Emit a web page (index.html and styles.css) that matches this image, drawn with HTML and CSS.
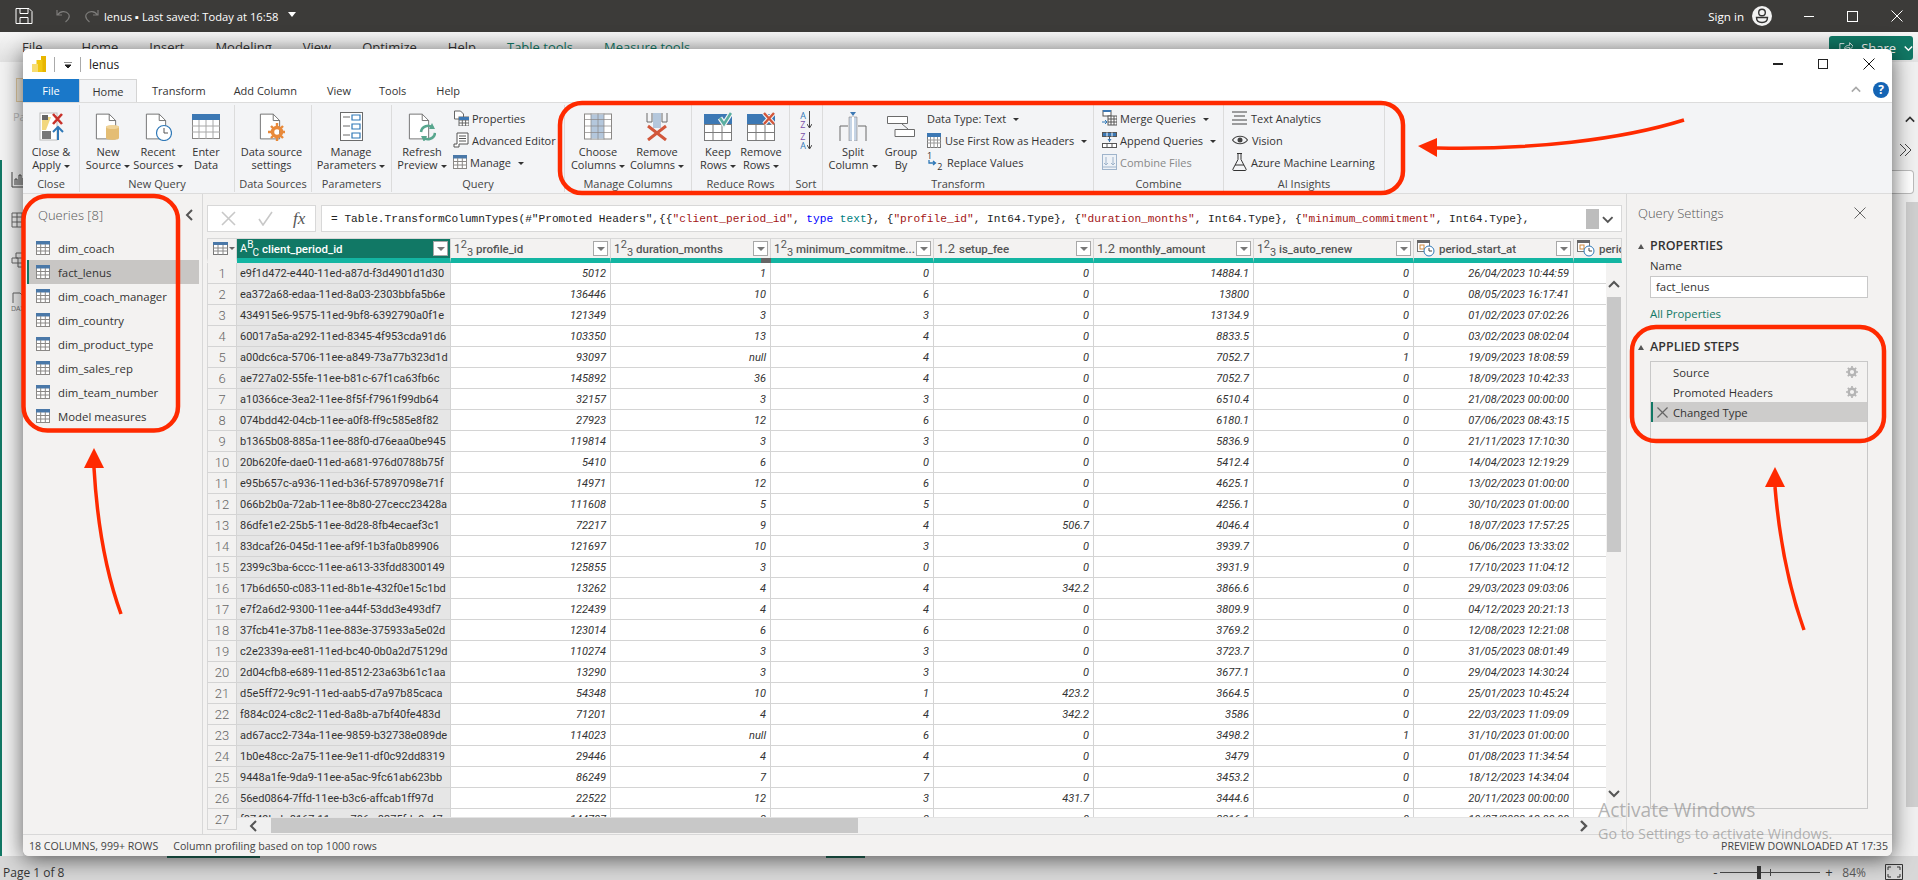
FILE: index.html
```html
<!DOCTYPE html>
<html lang="en">
<head>
<meta charset="utf-8">
<title>lenus - Power Query Editor</title>
<link rel="stylesheet" href="styles.css">
</head>
<body>
<svg class="defs" width="0" height="0" aria-hidden="true">
  <symbol id="qt" viewBox="0 0 14 14"><rect x=".5" y=".5" width="13" height="13" fill="#fff" stroke="#8a8886"/><rect x="0" y="0" width="14" height="3.5" fill="#4a78a8"/><path d="M0 6.5h14M0 10h14M4.700 3v11M9.300 3v11" stroke="#8a8886" fill="none"/></symbol>
  <symbol id="gear" viewBox="0 0 12 12"><circle cx="6" cy="6" r="3.300" fill="none" stroke="#b5b5b5" stroke-width="2.400"/><path d="M6 0v2.500M6 9.500V12M0 6h2.500M9.500 6H12M1.800 1.800l1.800 1.800M8.400 8.400l1.800 1.800M1.800 10.200l1.800-1.800M8.400 3.600l1.800-1.800" stroke="#b5b5b5" stroke-width="1.700"/></symbol>
  <symbol id="doc" viewBox="0 0 24 29"><path d="M1.500 1h14l7 7v20h-21z" fill="#fff" stroke="#6b6b6b"/><path d="M15.500 1v7h7" fill="none" stroke="#6b6b6b"/></symbol>
  <symbol id="cl" viewBox="0 0 12 12"><path d="M8 1 3 6l5 5" fill="none" stroke="currentColor" stroke-width="2"/></symbol>
  <symbol id="cr" viewBox="0 0 12 12"><path d="m4 1 5 5-5 5" fill="none" stroke="currentColor" stroke-width="2.400"/></symbol>
  <symbol id="cu" viewBox="0 0 12 12"><path d="m1 8 5-5 5 5" fill="none" stroke="currentColor" stroke-width="2"/></symbol>
  <symbol id="cd" viewBox="0 0 12 12"><path d="m1 4 5 5 5-5" fill="none" stroke="currentColor" stroke-width="2"/></symbol>
</svg>

<div class="app">
  <header class="titlebar">
    <svg class="tb-save" width="18" height="16" viewBox="0 0 18 16"><path d="M1 .5h13l3 3v12H1zM5 .5v5h8v-5M5 15.500v-6h8v6" fill="none" stroke="#fff"/></svg>
    <svg class="tb-undo" width="16" height="16" viewBox="0 0 16 16"><path d="M2 2v5h5M2.500 7C5 3 11 2.500 13.500 6c2 3-.5 6-3 8" fill="none" stroke="#7c7b79" stroke-width="1.200"/></svg>
    <svg class="tb-redo" width="16" height="16" viewBox="0 0 16 16"><path d="M14 2v5H9M13.500 7C11 3 5 2.500 2.500 6c-2 3 .5 6 3 8" fill="none" stroke="#7c7b79" stroke-width="1.200"/></svg>
    <span class="tb-title">lenus &#9642; Last saved: Today at 16:58</span>
    <span class="tb-caret"></span>
    <span class="tb-sign">Sign in</span>
    <svg class="tb-avatar" width="20" height="20" viewBox="0 0 20 20"><circle cx="10" cy="10" r="10" fill="#f2f2f2"/><circle cx="10" cy="6.500" r="3.300" fill="none" stroke="#333" stroke-width="1.400"/><path d="M4.500 11.500h11c0 3-2 5-5.500 5s-5.500-2-5.500-5z" fill="none" stroke="#333" stroke-width="1.400"/></svg>
    <span class="winbtn wb-min"></span>
    <span class="winbtn wb-max"></span>
    <svg class="winx" width="12" height="12" viewBox="0 0 12 12"><path d="m.5.500 11 11m0-11-11 11" stroke="#fff"/></svg>
  </header>

  <div class="bg-tabs">
    <span class="bt bt-file">File</span><span class="bt">Home</span><span class="bt">Insert</span><span class="bt">Modeling</span><span class="bt">View</span><span class="bt">Optimize</span><span class="bt">Help</span><span class="bt bt-tool">Table tools</span><span class="bt bt-tool">Measure tools</span>
    <span class="share"><svg width="16" height="14" viewBox="0 0 16 14"><path d="M6 2H1v11h11V9M6 9c0-4 3-5 6-5V1l4 4-4 4V6.500C9 6.500 7.500 7 6 9z" fill="none" stroke="#fff"/></svg>Share<svg width="10" height="10" viewBox="0 0 12 12"><use href="#cd"/></svg></span>
  </div>

  <div class="bg-main">
    <aside class="rail">
      <div class="rail-top"><span class="paste"></span><span class="pa">Pa</span></div>
      <div class="rail-low">
        <svg width="16" height="16" viewBox="0 0 16 16"><path d="M1 0v15h15M4 13V7h2v6M8 13V3h2v10M12 13V6h2v7" fill="none" stroke="#444"/></svg>
        <svg width="16" height="16" viewBox="0 0 16 16"><path d="M1 1h15v14H1zM1 5h15M1 10h15M6 1v14M11 1v14" fill="none" stroke="#666"/></svg>
        <svg width="16" height="16" viewBox="0 0 16 16"><path d="M5 1h8v5H5zM1 6h6v5H1zM7 11h8v4H7z" fill="none" stroke="#666"/></svg>
        <span class="dax"><svg width="14" height="12" viewBox="0 0 14 12"><path d="M2 11V1h7l3 3v7" fill="none" stroke="#666"/></svg>DAX</span>
      </div>
    </aside>
    <div class="bg-center"></div>
    <aside class="bg-right">
      <svg class="br-up" width="10" height="10" viewBox="0 0 12 12"><use href="#cu"/></svg>
      <svg class="br-more" width="14" height="14" viewBox="0 0 14 14"><path d="m2 1 6 6-6 6M7 1l6 6-6 6" fill="none" stroke="#444"/></svg>
      <div class="br-box"></div>
      <div class="br-scroll"></div>
    </aside>
  </div>

  <footer class="bg-foot">
    <span class="page">Page 1 of 8</span>
    <span class="pgmark pm1"></span><span class="pgmark pm2"></span>
    <div class="zoom">
      <span class="z-sign">-</span>
      <span class="z-track"><span class="z-thumb"></span><span class="z-tick"></span></span>
      <span class="z-sign">+</span>
      <span class="z-val">84%</span>
      <svg width="18" height="16" viewBox="0 0 18 16"><path d="M.5.500h17v15H.5zM3 6V3h3M12 3h3v3M15 10v3h-3M6 13H3v-3" fill="none" stroke="#333"/></svg>
    </div>
  </footer>

  <section class="window">
    <div class="wintitle">
      <svg class="pbi" width="14" height="16" viewBox="0 0 14 16"><rect x="9" y="0" width="5" height="16" fill="#e8b600"/><rect x="4.500" y="4" width="6" height="12" fill="#f2c811"/><rect x="0" y="8" width="6" height="8" fill="#f7dc6f"/></svg>
      <span class="wt-sep"></span>
      <svg class="wt-qat" width="8" height="7" viewBox="0 0 8 7"><path d="M0 0h8M1 3h6L4 6z" stroke="#222" fill="#222"/></svg>
      <span class="wt-sep"></span>
      <span class="wt-name">lenus</span>
      <span class="wt-min"></span>
      <span class="wt-max"></span>
      <svg class="wt-x" width="12" height="12" viewBox="0 0 12 12"><path d="m.5.500 11 11m0-11-11 11" stroke="#111"/></svg>
    </div>

    <nav class="tabs">
      <span class="tab tab-file">File</span>
      <span class="tab tab-home">Home</span>
      <span class="tab tab-transform">Transform</span>
      <span class="tab tab-add">Add Column</span>
      <span class="tab tab-view">View</span>
      <span class="tab tab-tools">Tools</span>
      <span class="tab tab-help">Help</span>
      <svg class="tab-collapse" width="10" height="10" viewBox="0 0 12 12"><use href="#cu"/></svg>
      <span class="help-circle">?</span>
    </nav>

    <div class="ribbon">
      <div class="group g-close">
        <div class="g-body">
          <div class="big w57">
            <svg class="ico" width="25" height="29" viewBox="0 0 25 29"><rect x="1" y="1" width="17" height="27" fill="#fff" stroke="#bbb"/><path d="M3 5h9l-5 13H3z" fill="#f2d77e"/><rect x="3" y="3" width="6" height="5" fill="#666"/><rect x="3" y="19" width="9" height="8" fill="#777"/><path d="m14 2 9 10m0-10-9 10" stroke="#c8322b" stroke-width="2.600"/><path d="M19 28V15m-5 5 5-5 5 5" stroke="#2f78b7" stroke-width="2" fill="none"/></svg>
            <span class="lbl">Close &amp;<br><span class="dd">Apply</span></span>
          </div>
        </div>
        <div class="g-name">Close</div>
      </div>

      <div class="group g-newq">
        <div class="g-body">
          <div class="big w56">
            <svg class="ico" width="26" height="29" viewBox="0 0 26 29"><use href="#doc" width="22" height="29"/><path d="M11 15c0-2 13-2 13 0v11c0 2.500-13 2.500-13 0z" fill="#e4bd74"/><ellipse cx="17.500" cy="15" rx="6.500" ry="2" fill="#f0d49a"/></svg>
            <span class="lbl">New<br><span class="dd">Source</span></span>
          </div>
          <div class="big w44">
            <svg class="ico" width="27" height="29" viewBox="0 0 27 29"><use href="#doc" width="22" height="29"/><circle cx="19" cy="21" r="7.500" fill="#fff" stroke="#2f78b7" stroke-width="1.200"/><path d="M19 16v5h4" fill="none" stroke="#555"/></svg>
            <span class="lbl">Recent<br><span class="dd">Sources</span></span>
          </div>
          <div class="big w52">
            <svg class="ico" width="28" height="25" viewBox="0 0 28 25"><rect x=".5" y=".5" width="27" height="24" fill="#fff" stroke="#8a8886"/><rect width="28" height="6" fill="#3c78b4"/><path d="M0 12h28M0 18h28M7 6v19M14 6v19M21 6v19" stroke="#a8a8a8" fill="none"/></svg>
            <span class="lbl">Enter<br>Data</span>
          </div>
        </div>
        <div class="g-name">New Query</div>
      </div>

      <div class="group g-data">
        <div class="g-body">
          <div class="big w73">
            <svg class="ico" width="26" height="29" viewBox="0 0 26 29"><use href="#doc" width="22" height="29"/><circle cx="18" cy="20" r="4.500" fill="none" stroke="#e8893a" stroke-width="3.500"/><path d="M18 11v4M18 25v4M9 20h4M23 20h3M12 14l2 2M22 24l2 2M12 26l2-2M22 16l2-2" stroke="#e8893a" stroke-width="2.400"/></svg>
            <span class="lbl">Data source<br>settings</span>
          </div>
        </div>
        <div class="g-name">Data Sources</div>
      </div>

      <div class="group g-param">
        <div class="g-body">
          <div class="big w78">
            <svg class="ico" width="23" height="29" viewBox="0 0 23 29"><rect x=".5" y=".5" width="22" height="28" fill="#fff" stroke="#6b6b6b"/><path d="M3 5h7M3 14h7M3 23h7" stroke="#6b6b6b"/><path d="M12 3h8v5h-8zM12 12h8v5h-8zM12 21h8v5h-8z" fill="#fff" stroke="#2f78b7" stroke-width="1.200"/></svg>
            <span class="lbl">Manage<br><span class="dd">Parameters</span></span>
          </div>
        </div>
        <div class="g-name">Parameters</div>
      </div>

      <div class="group g-query">
        <div class="g-body">
          <div class="big w60">
            <svg class="ico" width="28" height="29" viewBox="0 0 28 29"><use href="#doc" width="22" height="29"/><path d="M13 20a7 7 0 0 1 12-4M27 21a7 7 0 0 1-12 4" fill="none" stroke="#58a68e" stroke-width="2.600"/><path d="m24 11 3 6-6 0zM16 30l-3-6 6 0z" fill="#58a68e"/></svg>
            <span class="lbl">Refresh<br><span class="dd">Preview</span></span>
          </div>
          <div class="smalls">
            <div class="sm"><svg width="16" height="16" viewBox="0 0 16 16"><path d="M1.500 1h6l3 3v5h-9z" fill="#fff" stroke="#666"/><rect x="6" y="7" width="10" height="9" fill="#fff" stroke="#666"/><path d="M6 10h10M6 13h10M9.300 7v9M12.600 7v9" stroke="#666"/><rect x="6" y="7" width="10" height="3" fill="#3c78b4"/></svg><span>Properties</span></div>
            <div class="sm"><svg width="16" height="16" viewBox="0 0 16 16"><path d="M4 1h11v11H6v3H1v-3h3z" fill="#fff" stroke="#555"/><path d="M6 4h7M6 6.500h7M6 9h7" stroke="#555"/></svg><span>Advanced Editor</span></div>
            <div class="sm"><svg width="14" height="14" viewBox="0 0 14 14"><use href="#qt"/></svg><span class="dd dd-w">Manage</span></div>
          </div>
        </div>
        <div class="g-name">Query</div>
      </div>

      <div class="group g-mcol">
        <div class="g-body">
          <div class="big w66">
            <svg class="ico" width="28" height="26" viewBox="0 0 28 26"><rect x=".5" y=".5" width="27" height="25" fill="#fff" stroke="#8a8886"/><rect x="7" y="1" width="13" height="24" fill="#b4c7dc"/><path d="M0 6h28M0 12.500h28M0 19h28M7 0v26M14 0v26M20 0v26" stroke="#8a8886" fill="none" stroke-opacity=".7"/></svg>
            <span class="lbl">Choose<br><span class="dd">Columns</span></span>
          </div>
          <div class="big w52">
            <svg class="ico" width="22" height="29" viewBox="0 0 22 29"><path d="M6 1v9H1V1M16 1v9h5V1" fill="none" stroke="#6b6b6b"/><rect x="7" y="1" width="8" height="15" fill="#b4c7dc"/><path d="m2 14 18 14M20 14 2 28" stroke="#d2573b" stroke-width="3"/></svg>
            <span class="lbl">Remove<br><span class="dd">Columns</span></span>
          </div>
        </div>
        <div class="g-name">Manage Columns</div>
      </div>

      <div class="group g-rows">
        <div class="g-body">
          <div class="big w52">
            <svg class="ico" width="28" height="29" viewBox="0 0 28 29"><rect x=".5" y="12.500" width="27" height="16" fill="#fff" stroke="#7b7b7b"/><path d="M0 20.500h28M9 12v17M18 12v17" stroke="#7b7b7b"/><rect y="2" width="28" height="10" fill="#3c78b4"/><path d="m16 6 4 6 7-11" fill="none" stroke="#f3f4f6" stroke-width="5"/><path d="m16 6 4 6 7-11" fill="none" stroke="#5aaea0" stroke-width="2.600"/></svg>
            <span class="lbl">Keep<br><span class="dd">Rows</span></span>
          </div>
          <div class="big w34">
            <svg class="ico" width="28" height="29" viewBox="0 0 28 29"><rect x=".5" y="12.500" width="27" height="16" fill="#fff" stroke="#7b7b7b"/><path d="M0 20.500h28M9 12v17M18 12v17" stroke="#7b7b7b"/><rect y="2" width="28" height="10" fill="#3c78b4"/><path d="m17 1 10 11M27 1 17 12" stroke="#f3f4f6" stroke-width="4.500"/><path d="m17 1 10 11M27 1 17 12" stroke="#d2573b" stroke-width="2.400"/></svg>
            <span class="lbl">Remove<br><span class="dd">Rows</span></span>
          </div>
        </div>
        <div class="g-name">Reduce Rows</div>
      </div>

      <div class="group g-sort">
        <div class="g-body g-sortb">
          <div class="sorti"><span class="az"><b class="a-b">A</b><b class="a-p">Z</b></span><svg width="5" height="18" viewBox="0 0 5 18"><path d="M2.500 0v17M0 13l2.500 4L5 13" fill="none" stroke="#444"/></svg></div>
          <div class="sorti"><span class="az"><b class="a-p">Z</b><b class="a-b">A</b></span><svg width="5" height="18" viewBox="0 0 5 18"><path d="M2.500 0v17M0 13l2.500 4L5 13" fill="none" stroke="#444"/></svg></div>
        </div>
        <div class="g-name">Sort</div>
      </div>

      <div class="group g-trans">
        <div class="g-body">
          <div class="big w60">
            <svg class="ico" width="28" height="29" viewBox="0 0 28 29"><path d="M1 29V14h8M27 29V14h-8" fill="none" stroke="#6b6b6b"/><path d="M10 5h8v24h-8z" fill="#c6d5e6" stroke="#8a8886" stroke-width=".6"/><path d="M14 5v24" stroke="#fff" stroke-width="2"/><path d="m11 0 3 4 3-4z" fill="#3c78b4"/></svg>
            <span class="lbl">Split<br><span class="dd">Column</span></span>
          </div>
          <div class="big w36">
            <svg class="ico i-group" width="28" height="21" viewBox="0 0 28 21"><path d="M.5.500h20v7H.5zM8 13.500h19.500v7H8z" fill="#fff" stroke="#6b6b6b"/><path d="m15 8 6 5" stroke="#6b6b6b"/></svg>
            <span class="lbl">Group<br>By</span>
          </div>
          <div class="smalls s-trans">
            <div class="sm"><span class="dd dd-w">Data Type: Text</span></div>
            <div class="sm sm-i"><svg width="14" height="15" viewBox="0 0 14 15"><rect x=".5" y="1" width="13" height="13.500" fill="#fff" stroke="#777"/><rect width="14" height="4" fill="#3c78b4"/><path d="M0 7h14M0 10h14M3.500 4v11M7 4v11M10.500 4v11" stroke="#999"/></svg><span class="dd dd-w">Use First Row as Headers</span></div>
            <div class="sm sm-i"><span class="rep"><i>1</i><svg width="9" height="7" viewBox="0 0 9 7"><path d="M1 0v3h6M5 1l2.500 2L5 5" fill="none" stroke="#2f78b7" stroke-width="1.300"/></svg><i>2</i></span><span>Replace Values</span></div>
          </div>
        </div>
        <div class="g-name">Transform</div>
      </div>

      <div class="group g-comb">
        <div class="g-body">
          <div class="smalls s-pad">
            <div class="sm"><svg width="15" height="16" viewBox="0 0 15 16"><rect x="1" y="0" width="8" height="6" fill="#fff" stroke="#555"/><rect x="1" y="0" width="8" height="2" fill="#3c78b4"/><rect x="6" y="6" width="9" height="9" fill="#fff" stroke="#555"/><path d="M6 9h9M6 12h9M9 6v9M12 6v9" stroke="#555"/><path d="M0 12h5M3 10l2 2-2 2" fill="none" stroke="#2f78b7"/></svg><span class="dd dd-w">Merge Queries</span></div>
            <div class="sm"><svg width="15" height="16" viewBox="0 0 15 16"><rect x=".5" y=".5" width="14" height="4" fill="#3c78b4" stroke="#555"/><path d="M5 .5v4M10 .5v4" stroke="#fff"/><rect x=".5" y="11.500" width="14" height="4" fill="#fff" stroke="#555"/><path d="M5 11.500v4M10 11.500v4M7.500 5v5" stroke="#555"/><path d="m5.500 7 2 3 2-3z" fill="#3c78b4"/></svg><span class="dd dd-w">Append Queries</span></div>
            <div class="sm sm-off"><svg width="15" height="16" viewBox="0 0 15 16"><rect x=".5" y=".5" width="14" height="15" fill="#eef2f7" stroke="#9fb4cb"/><path d="M4 3v8m-2-2 2 2 2-2M11 3v8m-2-2 2 2 2-2M1 13h13" fill="none" stroke="#9fb4cb"/></svg><span>Combine Files</span></div>
          </div>
        </div>
        <div class="g-name">Combine</div>
      </div>

      <div class="group g-ai">
        <div class="g-body">
          <div class="smalls s-pad">
            <div class="sm sm-ai"><svg width="15" height="14" viewBox="0 0 15 14"><path d="M0 1h15M2 5h11M0 9h15M0 13h15" stroke="#444"/></svg><span>Text Analytics</span></div>
            <div class="sm sm-ai"><svg width="16" height="10" viewBox="0 0 16 10"><path d="M.5 5C4 0 12 0 15.500 5 12 10 4 10 .5 5z" fill="none" stroke="#444" stroke-width="1.200"/><circle cx="8" cy="5" r="2.500" fill="#444"/></svg><span>Vision</span></div>
            <div class="sm sm-ai"><svg width="15" height="18" viewBox="0 0 15 18"><path d="M5 .5h5M6 .5v6L1 16c-.5 1 0 1.500 1 1.500h11c1 0 1.500-.5 1-1.500L9 6.500v-6M3 12h9" fill="none" stroke="#333"/></svg><span>Azure Machine Learning</span></div>
          </div>
        </div>
        <div class="g-name">AI Insights</div>
      </div>
    </div>

    <div class="body">
      <aside class="queries">
        <div class="q-head"><span>Queries [8]</span><svg width="12" height="12" viewBox="0 0 12 12"><use href="#cl"/></svg></div>
        <ul class="q-list">
          <li><svg width="14" height="14"><use href="#qt"/></svg>dim_coach</li>
          <li class="sel"><svg width="14" height="14"><use href="#qt"/></svg>fact_lenus</li>
          <li><svg width="14" height="14"><use href="#qt"/></svg>dim_coach_manager</li>
          <li><svg width="14" height="14"><use href="#qt"/></svg>dim_country</li>
          <li><svg width="14" height="14"><use href="#qt"/></svg>dim_product_type</li>
          <li><svg width="14" height="14"><use href="#qt"/></svg>dim_sales_rep</li>
          <li><svg width="14" height="14"><use href="#qt"/></svg>dim_team_number</li>
          <li><svg width="14" height="14"><use href="#qt"/></svg>Model measures</li>
        </ul>
      </aside>

      <main class="center">
        <div class="fx-row">
          <div class="fx-btns">
            <svg width="15" height="15" viewBox="0 0 15 15"><path d="m1 1 13 13m0-13L1 14" stroke="#c8c8c8" stroke-width="1.600"/></svg>
            <svg width="15" height="15" viewBox="0 0 15 15"><path d="m1 8 4 6L14 1" fill="none" stroke="#c8c8c8" stroke-width="1.600"/></svg>
            <span class="fx">fx</span>
          </div>
          <div class="fx-input">
            <code class="formula">= Table.TransformColumnTypes(#"Promoted Headers",{{<s>"client_period_id"</s>, <u>type</u> <em>text</em>}, {<s>"profile_id"</s>, Int64.Type}, {<s>"duration_months"</s>, Int64.Type}, {<s>"minimum_commitment"</s>, Int64.Type},</code>
            <span class="fx-block"></span>
            <svg class="fx-chev" width="12" height="12" viewBox="0 0 12 12"><use href="#cd"/></svg>
          </div>
        </div>

        <div class="grid">
          <table class="data">
            <colgroup><col class="c0"><col class="c1"><col class="c2"><col class="c2"><col class="c3"><col class="c2"><col class="c2"><col class="c2"><col class="c2"><col class="c4"></colgroup>
            <thead>
              <tr>
                <th class="corner"><svg width="15" height="13" viewBox="0 0 15 13"><rect x=".5" y=".5" width="14" height="12" fill="#fff" stroke="#777"/><rect width="15" height="3" fill="#4a78a8"/><path d="M0 6h15M0 9h15M5 3v10M10 3v10" stroke="#888"/></svg><i class="tri"></i></th>
                <th class="h-sel"><div class="hd"><span class="ty abc">A<sup>B</sup><sub>C</sub></span><span class="nm">client_period_id</span><span class="fb"><i class="tri"></i></span></div></th>
                <th><div class="hd"><span class="ty">1<sup>2</sup><sub>3</sub></span><span class="nm">profile_id</span><span class="fb"><i class="tri"></i></span></div></th>
                <th><div class="hd"><span class="ty">1<sup>2</sup><sub>3</sub></span><span class="nm">duration_months</span><span class="fb"><i class="tri"></i></span></div></th>
                <th><div class="hd"><span class="ty">1<sup>2</sup><sub>3</sub></span><span class="nm">minimum_commitme...</span><span class="fb"><i class="tri"></i></span></div></th>
                <th><div class="hd"><span class="ty ty-d">1.2</span><span class="nm">setup_fee</span><span class="fb"><i class="tri"></i></span></div></th>
                <th><div class="hd"><span class="ty ty-d">1.2</span><span class="nm">monthly_amount</span><span class="fb"><i class="tri"></i></span></div></th>
                <th><div class="hd"><span class="ty">1<sup>2</sup><sub>3</sub></span><span class="nm">is_auto_renew</span><span class="fb"><i class="tri"></i></span></div></th>
                <th><div class="hd"><svg class="ty-cal" width="18" height="17" viewBox="0 0 18 17"><rect x=".5" y=".5" width="12" height="11" fill="#fff" stroke="#777"/><rect width="13" height="3" fill="#666"/><rect x="3" y="5" width="4" height="4" fill="none" stroke="#d08a3c"/><circle cx="12" cy="11" r="5" fill="#fff" stroke="#2f78b7"/><path d="M12 8v3h3" fill="none" stroke="#444"/></svg><span class="nm">period_start_at</span><span class="fb"><i class="tri"></i></span></div></th>
                <th class="h-clip"><div class="hd"><svg class="ty-cal" width="18" height="17" viewBox="0 0 18 17"><rect x=".5" y=".5" width="12" height="11" fill="#fff" stroke="#777"/><rect width="13" height="3" fill="#666"/><rect x="3" y="5" width="4" height="4" fill="none" stroke="#d08a3c"/><circle cx="12" cy="11" r="5" fill="#fff" stroke="#2f78b7"/><path d="M12 8v3h3" fill="none" stroke="#444"/></svg><span class="nm">period_end_at</span></div></th>
              </tr>
            </thead>
            <tbody>
              <tr><th>1</th><td>e9f1d472-e440-11ed-a87d-f3d4901d1d30</td><td>5012</td><td>1</td><td>0</td><td>0</td><td>14884.1</td><td>0</td><td>26/04/2023 10:44:59</td><td></td></tr>
              <tr><th>2</th><td>ea372a68-edaa-11ed-8a03-2303bbfa5b6e</td><td>136446</td><td>10</td><td>6</td><td>0</td><td>13800</td><td>0</td><td>08/05/2023 16:17:41</td><td></td></tr>
              <tr><th>3</th><td>434915e6-9575-11ed-9bf8-6392790a0f1e</td><td>121349</td><td>3</td><td>3</td><td>0</td><td>13134.9</td><td>0</td><td>01/02/2023 07:02:26</td><td></td></tr>
              <tr><th>4</th><td>60017a5a-a292-11ed-8345-4f953cda91d6</td><td>103350</td><td>13</td><td>4</td><td>0</td><td>8833.5</td><td>0</td><td>03/02/2023 08:02:04</td><td></td></tr>
              <tr><th>5</th><td>a00dc6ca-5706-11ee-a849-73a77b323d1d</td><td>93097</td><td>null</td><td>4</td><td>0</td><td>7052.7</td><td>1</td><td>19/09/2023 18:08:59</td><td></td></tr>
              <tr><th>6</th><td>ae727a02-55fe-11ee-b81c-67f1ca63fb6c</td><td>145892</td><td>36</td><td>4</td><td>0</td><td>7052.7</td><td>0</td><td>18/09/2023 10:42:33</td><td></td></tr>
              <tr><th>7</th><td>a10366ce-3ea2-11ee-8f5f-f7961f99db64</td><td>32157</td><td>3</td><td>3</td><td>0</td><td>6510.4</td><td>0</td><td>21/08/2023 00:00:00</td><td></td></tr>
              <tr><th>8</th><td>074bdd42-04cb-11ee-a0f8-ff9c585e8f82</td><td>27923</td><td>12</td><td>6</td><td>0</td><td>6180.1</td><td>0</td><td>07/06/2023 08:43:15</td><td></td></tr>
              <tr><th>9</th><td>b1365b08-885a-11ee-88f0-d76eaa0be945</td><td>119814</td><td>3</td><td>3</td><td>0</td><td>5836.9</td><td>0</td><td>21/11/2023 17:10:30</td><td></td></tr>
              <tr><th>10</th><td>20b620fe-dae0-11ed-a681-976d0788b75f</td><td>5410</td><td>6</td><td>0</td><td>0</td><td>5412.4</td><td>0</td><td>14/04/2023 12:19:29</td><td></td></tr>
              <tr><th>11</th><td>e95b657c-a936-11ed-b36f-57897098e71f</td><td>14971</td><td>12</td><td>6</td><td>0</td><td>4625.1</td><td>0</td><td>13/02/2023 01:00:00</td><td></td></tr>
              <tr><th>12</th><td>066b2b0a-72ab-11ee-8b80-27cecc23428a</td><td>111608</td><td>5</td><td>5</td><td>0</td><td>4256.1</td><td>0</td><td>30/10/2023 01:00:00</td><td></td></tr>
              <tr><th>13</th><td>86dfe1e2-25b5-11ee-8d28-8fb4ecaef3c1</td><td>72217</td><td>9</td><td>4</td><td>506.7</td><td>4046.4</td><td>0</td><td>18/07/2023 17:57:25</td><td></td></tr>
              <tr><th>14</th><td>83dcaf26-045d-11ee-af9f-1b3fa0b89906</td><td>121697</td><td>10</td><td>3</td><td>0</td><td>3939.7</td><td>0</td><td>06/06/2023 13:33:02</td><td></td></tr>
              <tr><th>15</th><td>2399c3ba-6ccc-11ee-a613-33fdd8300149</td><td>125855</td><td>3</td><td>0</td><td>0</td><td>3931.9</td><td>0</td><td>17/10/2023 11:04:12</td><td></td></tr>
              <tr><th>16</th><td>17b6d650-c083-11ed-8b1e-432f0e15c1bd</td><td>13262</td><td>4</td><td>4</td><td>342.2</td><td>3866.6</td><td>0</td><td>29/03/2023 09:03:06</td><td></td></tr>
              <tr><th>17</th><td>e7f2a6d2-9300-11ee-a44f-53dd3e493df7</td><td>122439</td><td>4</td><td>4</td><td>0</td><td>3809.9</td><td>0</td><td>04/12/2023 20:21:13</td><td></td></tr>
              <tr><th>18</th><td>37fcb41e-37b8-11ee-883e-375933a5e02d</td><td>123014</td><td>6</td><td>6</td><td>0</td><td>3769.2</td><td>0</td><td>12/08/2023 12:21:08</td><td></td></tr>
              <tr><th>19</th><td>c2e2339a-ee81-11ed-bc40-0b0a2d75129d</td><td>110274</td><td>3</td><td>3</td><td>0</td><td>3723.7</td><td>0</td><td>31/05/2023 08:01:49</td><td></td></tr>
              <tr><th>20</th><td>2d04cfb8-e689-11ed-8512-23a63b61c1aa</td><td>13290</td><td>3</td><td>3</td><td>0</td><td>3677.1</td><td>0</td><td>29/04/2023 14:30:24</td><td></td></tr>
              <tr><th>21</th><td>d5e5ff72-9c91-11ed-aab5-d7a97b85caca</td><td>54348</td><td>10</td><td>1</td><td>423.2</td><td>3664.5</td><td>0</td><td>25/01/2023 10:45:24</td><td></td></tr>
              <tr><th>22</th><td>f884c024-c8c2-11ed-8a8b-a7bf40fe483d</td><td>71201</td><td>4</td><td>4</td><td>342.2</td><td>3586</td><td>0</td><td>22/03/2023 11:09:09</td><td></td></tr>
              <tr><th>23</th><td>ad67acc2-734a-11ee-9859-b32738e089de</td><td>114023</td><td>null</td><td>6</td><td>0</td><td>3498.2</td><td>1</td><td>31/10/2023 01:00:00</td><td></td></tr>
              <tr><th>24</th><td>1b0e48cc-2a75-11ee-9e11-df0c92dd8319</td><td>29446</td><td>4</td><td>4</td><td>0</td><td>3479</td><td>0</td><td>01/08/2023 11:34:54</td><td></td></tr>
              <tr><th>25</th><td>9448a1fe-9da9-11ee-a5ac-9fc61ab623bb</td><td>86249</td><td>7</td><td>7</td><td>0</td><td>3453.2</td><td>0</td><td>18/12/2023 14:34:04</td><td></td></tr>
              <tr><th>26</th><td>56ed0864-7ffd-11ee-b3c6-affcab1ff97d</td><td>22522</td><td>12</td><td>3</td><td>431.7</td><td>3444.6</td><td>0</td><td>20/11/2023 00:00:00</td><td></td></tr>
              <tr><th>27</th><td>f8749bcb-8167-11ee-a786-c8375fdc9c47</td><td>144787</td><td>3</td><td>3</td><td>0</td><td>3316.1</td><td>0</td><td>10/07/2023 12:00:00</td><td></td></tr>
            </tbody>
          </table>
          <span class="dur-mark"></span>
          <div class="vscroll">
            <span class="vs-up"><svg width="12" height="12" viewBox="0 0 12 12"><use href="#cu"/></svg></span>
            <span class="vs-thumb"></span>
            <span class="vs-down"><svg width="12" height="12" viewBox="0 0 12 12"><use href="#cd"/></svg></span>
          </div>
          <div class="hscroll">
            <span class="hs-l"><svg width="12" height="12" viewBox="0 0 12 12"><use href="#cl"/></svg></span>
            <span class="hs-thumb"></span>
            <span class="hs-r"><svg width="12" height="12" viewBox="0 0 12 12"><use href="#cr"/></svg></span>
          </div>
        </div>
      </main>

      <aside class="settings">
        <div class="s-head"><span>Query Settings</span><svg width="12" height="12" viewBox="0 0 12 12"><path d="m.5.500 11 11m0-11-11 11" stroke="#666"/></svg></div>
        <h2 class="s-sec s-props">PROPERTIES</h2>
        <div class="s-label">Name</div>
        <div class="s-input">fact_lenus</div>
        <div class="s-link">All Properties</div>
        <h2 class="s-sec s-steps">APPLIED STEPS</h2>
        <ul class="steps">
          <li>Source<svg width="12" height="12"><use href="#gear"/></svg></li>
          <li>Promoted Headers<svg width="12" height="12"><use href="#gear"/></svg></li>
          <li class="cur"><svg class="st-x" width="11" height="11" viewBox="0 0 12 12"><path d="m.5.500 11 11m0-11-11 11" stroke="#666" stroke-width="1.300"/></svg>Changed Type</li>
        </ul>
      </aside>
    </div>

    <footer class="status">
      <span>18 COLUMNS, 999+ ROWS</span>
      <span class="st-prof">Column profiling based on top 1000 rows</span>
      <span class="st-prev">PREVIEW DOWNLOADED AT 17:35</span>
    </footer>
  </section>

  <div class="activate">
    <div class="act-1">Activate Windows</div>
    <div class="act-2">Go to Settings to activate Windows.</div>
  </div>

  <svg class="marks" width="1918" height="880" viewBox="0 0 1918 880" aria-hidden="true">
    <g fill="none" stroke="#ff2a00" stroke-width="4.500">
      <rect x="560" y="103" width="843" height="90" rx="22"/>
      <rect x="23.500" y="196" width="154.500" height="234.500" rx="24"/>
      <rect x="1632" y="327" width="252" height="114" rx="24"/>
      <path d="M1684 120C1620 140 1530 150 1437 148" stroke-width="3.500"/>
      <path d="M121 614C105 570 97 520 94 468" stroke-width="3.500"/>
      <path d="M1804 630C1788 585 1779 535 1775 487" stroke-width="3.500"/>
    </g>
    <g fill="#ff2a00">
      <polygon points="1418,146 1437,138 1437,157"/>
      <polygon points="94,448 84,468 104,468"/>
      <polygon points="1775,467 1765,487 1785,487"/>
    </g>
  </svg>
</div>
</body>
</html>
```

FILE: styles.css
```css
* { box-sizing: border-box; }
html, body { margin: 0; padding: 0; }
body { width: 1918px; height: 880px; overflow: hidden; font-family: "Open Sans", "Liberation Sans", sans-serif; font-size: 11px; color: #333; background: #e8e8e8; }
ul { list-style: none; margin: 0; padding: 0; }
h2 { margin: 0; }
.defs { position: absolute; }
.app { position: relative; width: 1918px; height: 880px; overflow: hidden; display: flex; flex-direction: column; }

/* Title bar */
.titlebar { height: 32px; flex: none; background: #3c3b39; color: #fff; display: flex; align-items: center; padding-left: 15px; }
.tb-save { margin-right: 15px; }
.tb-undo { margin-left: 7px; margin-right: 13px; }
.tb-title { margin-left: 4px; font-size: 11.2px; white-space: nowrap; width: 179px; }
.tb-caret { margin-left: 5px; margin-top: -3px; border: 4px solid transparent; border-top: 5px solid #fff; border-bottom: 0; }
.tb-sign { margin-left: auto; font-size: 11.6px; }
.tb-avatar { margin-left: 8px; }
.winbtn { display: block; }
.wb-min { width: 10px; height: 1px; background: #fff; margin-left: 32px; }
.wb-max { width: 11px; height: 11px; border: 1px solid #fff; margin-left: 33px; }
.winx { margin-left: 33px; margin-right: 15px; }

/* Application behind the dialog */
.bg-tabs { height: 30px; flex: none; display: flex; background: linear-gradient(#f6f6f6, #e2e2e2); padding: 6px 5px 0 22px; gap: 31px; font-size: 13px; color: #333; }
.bt { white-space: nowrap; line-height: 18px; }
.bt-file { margin-right: 8px; }
.bt-tool { color: #117865; }
.share { margin-left: auto; width: 84px; height: 24px; margin-top: -2px; background: #117865; color: #fff; border-radius: 3px; display: flex; align-items: center; gap: 8px; padding-left: 10px; }
.bg-main { flex: 1; display: flex; min-height: 0; }
.rail { width: 23px; flex: none; display: flex; flex-direction: column; overflow: hidden; }
.rail-top { height: 98px; background: #f3f3f3; padding: 16px 0 0 16px; position: relative; }
.paste { display: block; width: 12px; height: 24px; border: 1px solid #e0c9a0; background: #f2ecdf; }
.pa { display: block; margin-left: -3px; margin-top: 7px; color: #bbb; }
.rail-low { flex: 1; background: #f3f3f3; border-left: 2px solid #117865; display: flex; flex-direction: column; gap: 24px; padding: 12px 0 0 9px; background-clip: padding-box; }
.dax { display: block; font-size: 7px; line-height: 7px; color: #777; }
.bg-center { flex: 1; background: #e8e8e8; }
.bg-right { width: 26px; flex: none; background: #f0f0f0; display: flex; flex-direction: column; }
.br-up { margin: 53px 0 0 13px; }
.br-more { margin: 18px 0 0 6px; }
.br-box { width: 22px; height: 24px; margin-top: 13px; background: #fff; border: 1px solid #bbb; border-left: 0; border-radius: 0 4px 4px 0; }
.br-scroll { width: 12px; height: 605px; margin: 8px 0 0 14px; background: #cfcfcf; }
.bg-foot { height: 24px; flex: none; background: #d8d8d8; display: flex; align-items: center; padding: 8px 0 0 3px; position: relative; font-size: 12px; color: #333; }
.pgmark { position: absolute; top: 0; height: 2px; background: #1f6655; }
.pm1 { left: 167px; width: 93px; }
.pm2 { left: 826px; width: 39px; }
.page { position: relative; z-index: 3; }
.zoom { margin-left: auto; margin-right: 15px; display: flex; align-items: center; position: relative; z-index: 3; }
.z-sign { font-size: 13px; width: 7px; color: #333; }
.z-track { display: block; width: 100px; height: 1px; background: #444; margin: 0 5px 0 0; position: relative; }
.z-thumb { position: absolute; left: 37px; top: -6px; width: 4px; height: 13px; background: #333; }
.z-tick { position: absolute; left: 50px; top: -3px; width: 1px; height: 7px; background: #444; }
.z-val { margin: 0 19px 0 10px; color: #555; }

/* Dialog */
.window { position: absolute; left: 23px; top: 49px; width: 1869px; height: 807px; background: #f3f2f1; display: flex; flex-direction: column; border-radius: 6px; box-shadow: 0 3px 22px rgba(0,0,0,.62); overflow: hidden; }
.wintitle { height: 30px; flex: none; background: #fff; display: flex; align-items: center; padding-left: 9px; font-size: 12px; color: #222; }
.wt-sep { width: 1px; height: 15px; background: #aaa; margin-left: 8px; }
.wt-qat { margin-left: 9px; margin-right: -1px; margin-top: 2px; }
.wt-sep + .wt-qat + .wt-sep { margin-left: 9px; }
.wt-name { margin-left: 8px; }
.wt-min { width: 10px; height: 2px; background: #222; margin-left: auto; }
.wt-max { width: 10px; height: 10px; border: 1px solid #222; margin-left: 35px; }
.wt-x { margin-left: 35px; margin-right: 17px; }

.tabs { height: 23px; flex: none; background: #fff; display: flex; align-items: stretch; font-size: 11px; color: #333; position: relative; }
.tab { display: flex; align-items: center; white-space: nowrap; }
.tab-file { width: 56px; justify-content: center; background: #1a78c9; color: #fff; }
.tab-home { width: 58px; justify-content: center; background: #f3f4f6; border: 1px solid #d4d4d4; border-bottom: 0; }
.tab-transform { margin-left: 15px; }
.tab-add { margin-left: 28px; }
.tab-view { margin-left: 30px; }
.tab-tools { margin-left: 28px; }
.tab-help { margin-left: 30px; }
.tab-collapse { margin: 6px 0 0 auto; color: #aaa; }
.help-circle { width: 16px; height: 16px; border-radius: 50%; background: #1464b4; color: #fff; font-weight: 700; font-size: 12px; line-height: 16px; text-align: center; margin: 3px 3px 0 12px; }

/* Ribbon */
.ribbon { height: 92px; flex: none; background: #f3f4f6; display: flex; border-top: 1px solid #dcdcdc; border-bottom: 1px solid #dcdcdc; }
.group { display: flex; flex-direction: column; border-right: 1px solid #dcdcdc; margin: 2px 0 1px; }
.g-body { flex: 1; display: flex; min-height: 0; }
.g-name { height: 16px; line-height: 15px; text-align: center; color: #444; white-space: nowrap; }
.g-close { width: 57px; } .g-newq { width: 155px; } .g-data { width: 77px; } .g-param { width: 80px; }
.g-query { width: 173px; } .g-mcol { width: 127px; } .g-rows { width: 98px; } .g-sort { width: 33px; }
.g-trans { width: 271px; } .g-comb { width: 130px; } .g-ai { width: 161px; }
.big { display: flex; flex-direction: column; align-items: center; flex: none; }
.w34 { width: 34px; } .w36 { width: 36px; } .w44 { width: 44px; } .w52 { width: 52px; } .w56 { width: 56px; }
.w57 { width: 56px; } .w60 { width: 60px; } .w66 { width: 66px; } .w73 { width: 73px; } .w78 { width: 78px; }
.ico { height: 29px; margin-top: 7px; flex: none; }
.i-group { margin-top: 11px; height: 21px; margin-bottom: 4px; }
.lbl { margin-top: 4px; line-height: 13px; text-align: center; white-space: nowrap; color: #333; }
.big .lbl { height: 27px; }
.dd::after { content: ""; display: inline-block; vertical-align: middle; margin-left: 3px; border: 3px solid transparent; border-top: 3px solid #333; border-bottom: 0; }
.dd-w::after { margin-left: 7px; }
.smalls { display: flex; flex-direction: column; padding-top: 2px; margin-left: 1px; }
.sm { height: 22px; flex: none; display: flex; align-items: center; gap: 3px; white-space: nowrap; color: #333; }
.sm svg { flex: none; }
.s-trans { margin-left: 8px; }
.sm-i { gap: 4px; }
.s-pad { padding-left: 8px; margin-left: 0; }
.sm-off { color: #888; }
.sm-ai { gap: 4px; }
.g-sortb { flex-direction: column; align-items: center; padding-top: 6px; gap: 3px; }
.sorti { display: flex; height: 18px; gap: 1px; }
.az { display: flex; flex-direction: column; font-size: 9px; line-height: 9px; }
.az b { font-weight: 400; }
.a-b { color: #2f78b7; } .a-p { color: #7a4fa8; }
.rep { display: flex; align-items: center; width: 16px; font-size: 9px; position: relative; }
.rep i { font-style: normal; }
.rep i:first-child { position: relative; top: -7px; margin-right: -4px; }
.rep svg { position: relative; top: 1px; }
.rep i:last-child { position: relative; top: 4px; }

/* Body */
.body { flex: 1; display: flex; min-height: 0; background: #f3f2f1; }
.queries { width: 180px; flex: none; border-right: 1px solid #d8d8d8; font-size: 11.4px; color: #333; }
.q-head { height: 42px; display: flex; align-items: center; padding-left: 15px; font-size: 13px; color: #555; font-weight: 300; }
.q-head svg { margin-left: auto; margin-right: 6px; color: #555; }
.q-list li { height: 24px; margin-left: 4px; width: 172px; display: flex; align-items: center; gap: 8px; padding-left: 9px; color: #333; }
.q-list .sel { background: #c8c6c4; border-left: 2px solid #117865; padding-left: 7px; }

.center { flex: 1; min-width: 0; padding: 11px 4px 1px 4px; display: flex; flex-direction: column; }
.fx-row { height: 27px; flex: none; display: flex; gap: 5px; }
.fx-btns { width: 109px; background: #fff; border: 1px solid #d8d8d8; display: flex; align-items: center; padding-left: 13px; gap: 22px; }
.fx { font-family: "Liberation Serif", serif; font-style: italic; font-size: 17px; color: #555; margin-left: -2px; }
.fx-input { flex: 1; min-width: 0; background: #fff; border: 1px solid #d8d8d8; display: flex; align-items: center; padding-left: 9px; }
.formula { font-family: "Liberation Mono", "DejaVu Sans Mono", monospace; font-size: 11.17px; white-space: pre; color: #222; flex: none; width: 1255px; overflow: hidden; }
.formula s { text-decoration: none; color: #a31515; }
.formula u { text-decoration: none; color: #0000ff; }
.formula em { font-style: normal; color: #008080; }
.fx-block { width: 14px; height: 20px; background: #bdbdbd; margin-left: auto; }
.fx-chev { margin: 0 7px 0 3px; color: #555; }

.grid { flex: 1; min-height: 0; margin-top: 6px; position: relative; overflow: hidden; background: #f3f2f1; }
.data { table-layout: fixed; width: 1415px; border-collapse: separate; border-spacing: 0; background: #fff; font-family: Roboto, "Open Sans", sans-serif; }
.c0 { width: 30px; } .c1 { width: 214px; } .c2 { width: 160px; } .c3 { width: 163px; } .c4 { width: 48px; }
.data thead th { height: 25px; padding: 0; background: #f3f2f1; border-top: 1px solid #d8d8d8; border-right: 1px solid #d4d4d4; border-bottom: 5px solid #13b5a2; font-weight: 400; overflow: hidden; white-space: nowrap; }
.data thead .corner { background: #f3f2f1; border-bottom-color: #f3f2f1; border-left: 1px solid #d8d8d8; text-align: left; padding-left: 5px; }
.corner svg { vertical-align: middle; }
.tri { display: inline-block; border: 3px solid transparent; border-top: 3px solid #666; border-bottom: 0; vertical-align: middle; margin-left: 1px; }
.hd { display: flex; align-items: center; height: 19px; padding-left: 3px; padding-right: 2px; }
.nm { font-size: 11.5px; font-weight: 500; color: #555; white-space: nowrap; }
.ty { width: 22px; flex: none; font-size: 12px; line-height: 16px; color: #555; display: flex; align-items: flex-start; padding-top: 1px; }
.ty sup, .ty sub { font-size: 11px; line-height: 11px; vertical-align: baseline; }
.ty sup { margin-top: -2px; }
.ty sub { margin-top: 6px; }
.ty-d { font-size: 13px; align-items: center; width: 22px; padding-top: 0; }
.ty-cal { flex: none; width: 18px; margin-right: 4px; }
.fb { flex: none; margin-left: auto; width: 15px; height: 15px; background: #fff; border: 1px solid #a8a8a8; display: flex; align-items: center; justify-content: center; }
.fb .tri { margin: 0; border-width: 4px; border-top-color: #777; border-bottom: 0; }
.data thead .h-sel { background: #117865; }
.h-sel .nm, .h-sel .abc { color: #fff; }
.abc { width: 22px; font-size: 11px; }
.abc sup, .abc sub { font-size: 10px; }
.abc sub { margin-left: -1px; }
.h-clip .hd { padding-right: 0; }
.data tbody th { height: 21px; padding: 0; background: #f3f2f1; border-right: 1px solid #d4d4d4; border-bottom: 1px solid #d4d4d4; border-left: 1px solid #d8d8d8; font-size: 13px; font-weight: 300; color: #666; text-align: center; }
.data td { height: 21px; padding: 0 4px 0 0; border-right: 1px solid #d4d4d4; border-bottom: 1px solid #d4d4d4; text-align: right; font-style: italic; white-space: nowrap; overflow: hidden; color: #333; font-size: 11px; }
.data td:nth-child(2) { background: #e6e6e6; text-align: left; font-style: normal; padding-left: 3px; }
.dur-mark { position: absolute; left: 554px; top: 20px; width: 10px; height: 5px; background: #666; }

.vscroll { position: absolute; right: 0; top: 25px; width: 16px; bottom: 16px; background: #f3f2f1; display: flex; flex-direction: column; align-items: center; color: #555; }
.vs-up { height: 34px; display: flex; align-items: flex-end; padding-bottom: 6px; }
.vs-thumb { width: 14px; height: 255px; background: #c8c8c8; }
.vs-down { margin-top: auto; height: 30px; display: flex; align-items: flex-start; }
.hscroll { position: absolute; left: 30px; right: 0; bottom: 0; height: 16px; background: #f0f0f0; display: flex; align-items: center; color: #555; border-top: 1px solid #e4e4e4; }
.hs-l { width: 34px; display: flex; justify-content: center; }
.hs-thumb { width: 587px; height: 15px; background: #c8c8c8; }
.hs-r { margin-left: auto; margin-right: 33px; display: flex; }

.settings { width: 266px; flex: none; border-left: 1px solid #d8d8d8; padding-left: 11px; }
.s-head { height: 38px; display: flex; align-items: center; font-size: 13px; color: #555; font-weight: 300; }
.s-head svg { margin-left: auto; margin-right: 26px; }
.s-sec { font-size: 12.5px; font-weight: 600; color: #333; padding-left: 12px; position: relative; line-height: 16px; }
.s-sec::before { content: ""; position: absolute; left: 0; top: 6px; border-left: 3px solid transparent; border-right: 3px solid transparent; border-bottom: 5px solid #555; }
.s-props { margin-top: 6px; }
.s-label { margin: 3px 0 0 12px; font-size: 11.4px; line-height: 18px; }
.s-input { margin: 1px 0 0 12px; width: 218px; height: 22px; background: #fff; border: 1px solid #c8c8c8; line-height: 20px; padding-left: 5px; font-size: 11.4px; }
.s-link { margin: 6px 0 0 12px; color: #117865; font-size: 11.4px; line-height: 20px; }
.s-steps { margin-top: 15px; }
.steps { margin: 6px 0 0 12px; width: 218px; height: 448px; border: 1px solid #c8c8c8; font-size: 11.3px; }
.steps li { height: 20px; display: flex; align-items: center; padding-left: 22px; padding-right: 9px; justify-content: space-between; }
.steps .cur { background: #cdcccb; border-left: 2px solid #117865; padding-left: 4px; justify-content: flex-start; gap: 5px; }

.status { height: 22px; flex: none; display: flex; align-items: center; padding: 0 4px 0 6px; font-size: 10.6px; border-top: 1px solid #d8d8d8; background: #f3f2f1; color: #444; }
.st-prof { margin-left: 15px; }
.st-prev { margin-left: auto; }

/* Overlays */
.activate { position: absolute; left: 1598px; top: 797px; color: rgba(120,120,120,.55); pointer-events: none; }
.act-1 { font-size: 19.2px; line-height: 26px; }
.act-2 { font-size: 14.3px; line-height: 20px; margin-top: 1px; white-space: nowrap; }
.marks { position: absolute; left: 0; top: 0; pointer-events: none; }
```
